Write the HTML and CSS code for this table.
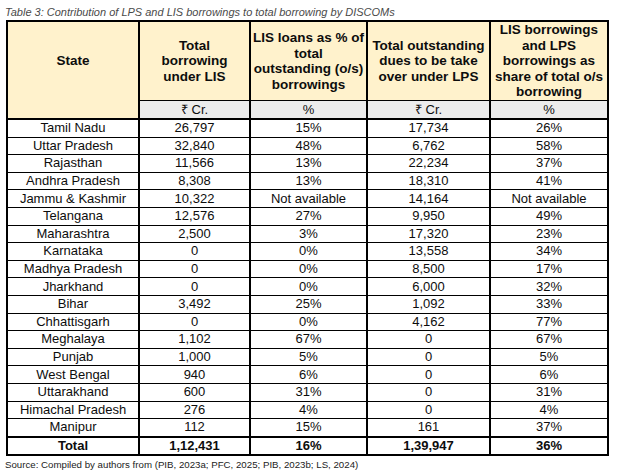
FILE: index.html
```html
<!DOCTYPE html>
<html>
<head>
<meta charset="utf-8">
<link rel="stylesheet" href="styles.css">
</head>
<body>
<div class="caption">Table 3: Contribution of LPS and LIS borrowings to total borrowing by DISCOMs</div>
<table class="data">
  <colgroup>
    <col class="c1"><col class="c2"><col class="c3"><col class="c4"><col class="c5">
  </colgroup>
  <thead>
    <tr class="head">
      <th rowspan="2" class="state-h">State</th>
      <th>Total<br>borrowing<br>under LIS</th>
      <th>LIS loans as % of<br>total<br>outstanding (o/s)<br>borrowings</th>
      <th>Total outstanding<br>dues to be take<br>over under LPS</th>
      <th>LIS borrowings<br>and LPS<br>borrowings as<br>share of total o/s<br>borrowing</th>
    </tr>
    <tr class="units">
      <td>₹ Cr.</td><td>%</td><td>₹ Cr.</td><td>%</td>
    </tr>
  </thead>
  <tbody>
    <tr><td>Tamil Nadu</td><td>26,797</td><td>15%</td><td>17,734</td><td>26%</td></tr>
    <tr><td>Uttar Pradesh</td><td>32,840</td><td>48%</td><td>6,762</td><td>58%</td></tr>
    <tr><td>Rajasthan</td><td>11,566</td><td>13%</td><td>22,234</td><td>37%</td></tr>
    <tr><td>Andhra Pradesh</td><td>8,308</td><td>13%</td><td>18,310</td><td>41%</td></tr>
    <tr><td>Jammu &amp; Kashmir</td><td>10,322</td><td>Not available</td><td>14,164</td><td>Not available</td></tr>
    <tr><td>Telangana</td><td>12,576</td><td>27%</td><td>9,950</td><td>49%</td></tr>
    <tr><td>Maharashtra</td><td>2,500</td><td>3%</td><td>17,320</td><td>23%</td></tr>
    <tr><td>Karnataka</td><td>0</td><td>0%</td><td>13,558</td><td>34%</td></tr>
    <tr><td>Madhya Pradesh</td><td>0</td><td>0%</td><td>8,500</td><td>17%</td></tr>
    <tr><td>Jharkhand</td><td>0</td><td>0%</td><td>6,000</td><td>32%</td></tr>
    <tr><td>Bihar</td><td>3,492</td><td>25%</td><td>1,092</td><td>33%</td></tr>
    <tr><td>Chhattisgarh</td><td>0</td><td>0%</td><td>4,162</td><td>77%</td></tr>
    <tr><td>Meghalaya</td><td>1,102</td><td>67%</td><td>0</td><td>67%</td></tr>
    <tr><td>Punjab</td><td>1,000</td><td>5%</td><td>0</td><td>5%</td></tr>
    <tr><td>West Bengal</td><td>940</td><td>6%</td><td>0</td><td>6%</td></tr>
    <tr><td>Uttarakhand</td><td>600</td><td>31%</td><td>0</td><td>31%</td></tr>
    <tr><td>Himachal Pradesh</td><td>276</td><td>4%</td><td>0</td><td>4%</td></tr>
    <tr><td>Manipur</td><td>112</td><td>15%</td><td>161</td><td>37%</td></tr>
    <tr class="total"><td>Total</td><td>1,12,431</td><td>16%</td><td>1,39,947</td><td>36%</td></tr>
  </tbody>
</table>
<div class="source">Source: Compiled by authors from (PIB, 2023a; PFC, 2025; PIB, 2023b; LS, 2024)</div>
</body>
</html>
```
FILE: styles.css
```css
html, body {
  margin: 0;
  padding: 0;
  background: #ffffff;
}
body {
  padding: 5px 0 0 6px;
  font-family: "Liberation Sans", Arial, sans-serif;
  color: #0d0d0d;
}
.caption {
  font-size: 11px;
  font-style: italic;
  color: #4a4a4a;
  line-height: 14px;
  height: 15px;
  margin-left: -1px;
}
.data {
  border-collapse: collapse;
  width: 601px;
  table-layout: fixed;
  font-size: 13px;
  border: 2px solid #000;
}
.c1 { width: 132px; }
.c2 { width: 111px; }
.c3 { width: 117px; }
.c4 { width: 123px; }
.c5 { width: 118px; }
.data th, .data td {
  text-align: center;
  padding: 0;
  border-left: 2px solid #000;
  border-right: 2px solid #000;
  white-space: nowrap;
}
.data th {
  background: #fff2cc;
  font-weight: bold;
  font-size: 13.5px;
  line-height: 15.5px;
  height: 78px;
  border-top: 2px solid #000;
  border-bottom: 1px solid #000;
}
.data .state-h {
  border-bottom: 2px solid #000;
  padding-bottom: 18px;
}
.units td {
  background: #ececec;
  height: 17px;
  line-height: 16px;
  border-bottom: 2px solid #000;
}
.data tbody td {
  height: 16.6px;
  line-height: 16px;
  border-bottom: 1px solid #000;
}
.data tbody tr.total td {
  font-weight: bold;
  border-top: 2px solid #000;
  border-bottom: 2px solid #000;
  height: 15px;
}
.source {
  font-size: 9.7px;
  color: #222;
  line-height: 14px;
  margin-top: 2px;
  margin-left: -1px;
}
```
